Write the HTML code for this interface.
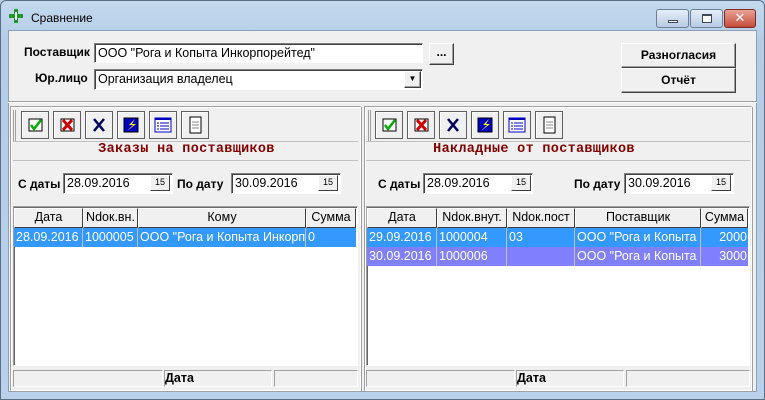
<!DOCTYPE html><html><head><meta charset="utf-8"><style>
*{box-sizing:border-box;margin:0;padding:0}
body{width:765px;height:400px;overflow:hidden;background:#b9d1ea;font-family:"Liberation Sans","DejaVu Sans",sans-serif;font-size:12px;position:relative}
.a{position:absolute}
.frame{left:0;top:0;width:765px;height:400px;background:linear-gradient(#c4d9ee,#b4cde7 40px,#b9d1ea);border:1px solid #5a6e86;border-radius:6px 6px 0 0}
.client{left:8px;top:30px;width:749px;height:362px;background:#f0f0f0;border:1px solid #8ba0b8}
.inp{background:#fff;border:1px solid;border-color:#808080 #fff #fff #808080;box-shadow:inset 1px 1px 0 #404040;padding:2px 3px;font-size:12.5px;white-space:nowrap;overflow:hidden}
.btn{background:#f0f0f0;border:1px solid;border-color:#fff #404040 #404040 #fff;box-shadow:inset -1px -1px 0 #a0a0a0;text-align:center;font-weight:bold}
.b{font-weight:bold}
.panel{border:1px solid;border-color:#a0a0a0 #fff #fff #a0a0a0;box-shadow:inset 1px 1px 0 #fff, 1px 1px 0 #a0a0a0}
.ttl{font-family:"Liberation Mono",monospace;color:#800000;font-size:13.5px;font-weight:bold;letter-spacing:0.3px;text-align:center}
.grid{background:#fff;border:1px solid;border-color:#a0a0a0 #fff #fff #a0a0a0;box-shadow:inset 1px 1px 0 #696969}
.hd{height:20px;background:#f0f0f0;border:1px solid;border-color:#fff #404040 #404040 #fff;text-align:center;line-height:17px;font-size:12.5px;overflow:hidden}
.cell{height:19px;line-height:18px;font-size:12.5px;color:#fff;padding-left:2px;border-right:1px solid #c0c0c0;overflow:hidden;white-space:nowrap}
.st{height:17px;border:1px solid;border-color:#a0a0a0 #fff #fff #a0a0a0;font-weight:bold;font-size:12.5px;line-height:15px}
.cal{width:20px;height:16px;background:#f0f0f0;border:1px solid;border-color:#fff #404040 #404040 #fff;font-size:9px;text-align:center;line-height:13px}
</style></head><body>
<div class="a frame"></div>
<svg class="a" style="left:9px;top:9px" width="14" height="14"><path d="M5 0h4v5h5v4H9v5H5V9H0V5h5z" fill="#1d9a2a"/><path d="M6 3h2v8H6z" fill="#fff"/></svg>
<div class="a" style="left:31px;top:11px;font-size:12px;color:#000">Сравнение</div>
<div class="a" style="left:656px;top:9px;width:33px;height:19px;border:1px solid #6d7f98;border-radius:3px;background:linear-gradient(#e4eef9,#b8cbe2)"><div class="a" style="left:11px;top:10px;width:10px;height:3px;border:1px solid #3c4a5c;background:#fff"></div></div>
<div class="a" style="left:690px;top:9px;width:33px;height:19px;border:1px solid #6d7f98;border-radius:3px;background:linear-gradient(#e4eef9,#b8cbe2)"><div class="a" style="left:11px;top:4px;width:10px;height:9px;border:1px solid #3c4a5c;border-top-width:2px;background:#fff"></div></div>
<div class="a" style="left:724px;top:9px;width:32px;height:19px;border:1px solid #7d2a20;border-radius:3px;background:linear-gradient(#e8a396,#c64b3a);color:#fff;font-weight:bold;text-align:center;line-height:16px;font-size:13px">✕</div>
<div class="a client"></div>
<div class="a b" style="left:24px;top:45px">Поставщик</div>
<div class="a inp" style="left:94px;top:43px;width:329px;height:20px">ООО "Рога и Копыта Инкорпорейтед"</div>
<div class="a btn" style="left:429px;top:43px;width:25px;height:22px;line-height:16px">...</div>
<div class="a b" style="left:35px;top:71px">Юр.лицо</div>
<div class="a inp" style="left:94px;top:69px;width:329px;height:21px">Организация владелец</div>
<div class="a btn" style="left:404px;top:71px;width:17px;height:17px;font-size:8px;line-height:14px">▼</div>
<div class="a btn" style="left:621px;top:43px;width:115px;height:25px;line-height:22px">Разногласия</div>
<div class="a btn" style="left:621px;top:68px;width:115px;height:25px;line-height:22px">Отчёт</div>
<div class="a" style="left:8px;top:101px;width:749px;height:2px;border-top:1px solid #a0a0a0;border-bottom:1px solid #fff"></div>

<!-- left panel -->
<div class="a panel" style="left:10px;top:106px;width:351px;height:285px"></div>
<div class="a" style="left:13px;top:110px;width:202px;height:31px;border-left:3px double #a0a0a0"></div>
<div class="a" style="left:13px;top:141px;width:345px;height:20px;border-top:1px solid #c0c0c0;border-bottom:1px solid #c0c0c0"></div>
<div class="a ttl" style="left:13px;top:142px;width:347px">Заказы на поставщиков</div>
<div class="a b" style="left:18px;top:177px">С даты</div>
<div class="a inp" style="left:63px;top:173px;width:110px;height:21px">28.09.2016</div>
<div class="a cal" style="left:150px;top:175px">15</div>
<div class="a b" style="left:177px;top:177px">По дату</div>
<div class="a inp" style="left:231px;top:173px;width:110px;height:21px">30.09.2016</div>
<div class="a cal" style="left:318px;top:175px">15</div>
<div class="a grid" style="left:13px;top:206px;width:345px;height:160px"></div>
<div class="a hd" style="left:14px;top:208px;width:69px">Дата</div>
<div class="a hd" style="left:83px;top:208px;width:55px">Ndок.вн.</div>
<div class="a hd" style="left:138px;top:208px;width:168px">Кому</div>
<div class="a hd" style="left:306px;top:208px;width:50px">Сумма</div>
<div class="a" style="left:14px;top:228px;width:342px;height:19px;background:#3399ff"></div>
<div class="a cell" style="left:14px;top:228px;width:69px">28.09.2016</div>
<div class="a cell" style="left:83px;top:228px;width:55px">1000005</div>
<div class="a cell" style="left:138px;top:228px;width:168px">ООО "Рога и Копыта Инкорп</div>
<div class="a cell" style="left:306px;top:228px;width:50px;border:0">0</div>
<div class="a st" style="left:13px;top:370px;width:150px"></div>
<div class="a st" style="left:164px;top:370px;width:108px">Дата</div>
<div class="a st" style="left:274px;top:370px;width:84px"></div>

<!-- right panel -->
<div class="a panel" style="left:364px;top:106px;width:388px;height:285px"></div>
<div class="a" style="left:368px;top:110px;width:202px;height:31px;border-left:3px double #a0a0a0"></div>
<div class="a" style="left:366px;top:141px;width:384px;height:20px;border-top:1px solid #c0c0c0;border-bottom:1px solid #c0c0c0"></div>
<div class="a ttl" style="left:366px;top:142px;width:336px">Накладные от поставщиков</div>
<div class="a b" style="left:378px;top:177px">С даты</div>
<div class="a inp" style="left:423px;top:173px;width:110px;height:21px">28.09.2016</div>
<div class="a cal" style="left:511px;top:175px">15</div>
<div class="a b" style="left:574px;top:177px">По дату</div>
<div class="a inp" style="left:624px;top:173px;width:110px;height:21px">30.09.2016</div>
<div class="a cal" style="left:711px;top:175px">15</div>
<div class="a grid" style="left:366px;top:206px;width:384px;height:160px"></div>
<div class="a hd" style="left:367px;top:208px;width:70px">Дата</div>
<div class="a hd" style="left:437px;top:208px;width:70px">Ndок.внут.</div>
<div class="a hd" style="left:507px;top:208px;width:68px">Ndок.пост</div>
<div class="a hd" style="left:575px;top:208px;width:126px">Поставщик</div>
<div class="a hd" style="left:701px;top:208px;width:47px">Сумма</div>
<div class="a" style="left:367px;top:228px;width:381px;height:19px;background:#3399ff"></div>
<div class="a" style="left:367px;top:247px;width:381px;height:19px;background:#8080ff"></div>
<div class="a cell" style="left:367px;top:228px;width:70px">29.09.2016</div>
<div class="a cell" style="left:437px;top:228px;width:70px">1000004</div>
<div class="a cell" style="left:507px;top:228px;width:68px">03</div>
<div class="a cell" style="left:575px;top:228px;width:126px">ООО "Рога и Копыта</div>
<div class="a cell" style="left:701px;top:228px;width:47px;text-align:right;padding-right:1px;border:0">2000</div>
<div class="a cell" style="left:367px;top:247px;width:70px">30.09.2016</div>
<div class="a cell" style="left:437px;top:247px;width:70px">1000006</div>
<div class="a cell" style="left:507px;top:247px;width:68px"></div>
<div class="a cell" style="left:575px;top:247px;width:126px">ООО "Рога и Копыта</div>
<div class="a cell" style="left:701px;top:247px;width:47px;text-align:right;padding-right:1px;border:0">3000</div>
<div class="a st" style="left:366px;top:370px;width:149px"></div>
<div class="a st" style="left:516px;top:370px;width:108px">Дата</div>
<div class="a st" style="left:626px;top:370px;width:124px"></div>

<svg class="a" style="left:21px;top:111px" width="200" height="30">
<g><rect x="0.5" y="0.5" width="27" height="27" fill="#f0f0f0" stroke="#606060"/><path d="M1.5 26.5v-25h25" stroke="#fff" fill="none"/><rect x="8" y="8" width="13" height="12" fill="#fff" stroke="#000"/><path d="M10 14l3 4 7-9" stroke="#0a0" stroke-width="2.5" fill="none"/></g>
<g transform="translate(32,0)"><rect x="0.5" y="0.5" width="27" height="27" fill="#f0f0f0" stroke="#606060"/><path d="M1.5 26.5v-25h25" stroke="#fff" fill="none"/><rect x="8" y="8" width="13" height="12" fill="#fff" stroke="#000"/><path d="M10 9l9 10M19 9l-9 10" stroke="#c00" stroke-width="3"/></g>
<g transform="translate(64,0)"><rect x="0.5" y="0.5" width="27" height="27" fill="#f0f0f0" stroke="#606060"/><path d="M1.5 26.5v-25h25" stroke="#fff" fill="none"/><path d="M9 8l10 12M19 8L9 20" stroke="#000060" stroke-width="2.5"/></g>
<g transform="translate(96,0)"><rect x="0.5" y="0.5" width="27" height="27" fill="#f0f0f0" stroke="#606060"/><path d="M1.5 26.5v-25h25" stroke="#fff" fill="none"/><rect x="7" y="7" width="14" height="14" fill="#0000c0" stroke="#000"/><path d="M18 8l-6 6h4l-6 6 9-7h-4z" fill="#ff0"/></g>
<g transform="translate(128,0)"><rect x="0.5" y="0.5" width="27" height="27" fill="#f0f0f0" stroke="#606060"/><path d="M1.5 26.5v-25h25" stroke="#fff" fill="none"/><rect x="6" y="7" width="16" height="14" fill="#fff" stroke="#0000c0"/><rect x="6" y="7" width="16" height="2" fill="#0000c0"/><path d="M8 12h2M11 12h9M8 15h2M11 15h9M8 18h2M11 18h9" stroke="#0000c0"/></g>
<g transform="translate(160,0)"><rect x="0.5" y="0.5" width="27" height="27" fill="#f0f0f0" stroke="#606060"/><path d="M1.5 26.5v-25h25" stroke="#fff" fill="none"/><rect x="9" y="6" width="11" height="16" fill="#fff" stroke="#000"/><path d="M11 11h7M11 14h7M11 17h7" stroke="#888"/></g>
</svg>
<svg class="a" style="left:375px;top:111px" width="200" height="30">
<g><rect x="0.5" y="0.5" width="27" height="27" fill="#f0f0f0" stroke="#606060"/><path d="M1.5 26.5v-25h25" stroke="#fff" fill="none"/><rect x="8" y="8" width="13" height="12" fill="#fff" stroke="#000"/><path d="M10 14l3 4 7-9" stroke="#0a0" stroke-width="2.5" fill="none"/></g>
<g transform="translate(32,0)"><rect x="0.5" y="0.5" width="27" height="27" fill="#f0f0f0" stroke="#606060"/><path d="M1.5 26.5v-25h25" stroke="#fff" fill="none"/><rect x="8" y="8" width="13" height="12" fill="#fff" stroke="#000"/><path d="M10 9l9 10M19 9l-9 10" stroke="#c00" stroke-width="3"/></g>
<g transform="translate(64,0)"><rect x="0.5" y="0.5" width="27" height="27" fill="#f0f0f0" stroke="#606060"/><path d="M1.5 26.5v-25h25" stroke="#fff" fill="none"/><path d="M9 8l10 12M19 8L9 20" stroke="#000060" stroke-width="2.5"/></g>
<g transform="translate(96,0)"><rect x="0.5" y="0.5" width="27" height="27" fill="#f0f0f0" stroke="#606060"/><path d="M1.5 26.5v-25h25" stroke="#fff" fill="none"/><rect x="7" y="7" width="14" height="14" fill="#0000c0" stroke="#000"/><path d="M18 8l-6 6h4l-6 6 9-7h-4z" fill="#ff0"/></g>
<g transform="translate(128,0)"><rect x="0.5" y="0.5" width="27" height="27" fill="#f0f0f0" stroke="#606060"/><path d="M1.5 26.5v-25h25" stroke="#fff" fill="none"/><rect x="6" y="7" width="16" height="14" fill="#fff" stroke="#0000c0"/><rect x="6" y="7" width="16" height="2" fill="#0000c0"/><path d="M8 12h2M11 12h9M8 15h2M11 15h9M8 18h2M11 18h9" stroke="#0000c0"/></g>
<g transform="translate(160,0)"><rect x="0.5" y="0.5" width="27" height="27" fill="#f0f0f0" stroke="#606060"/><path d="M1.5 26.5v-25h25" stroke="#fff" fill="none"/><rect x="9" y="6" width="11" height="16" fill="#fff" stroke="#000"/><path d="M11 11h7M11 14h7M11 17h7" stroke="#888"/></g>
</svg>
</body></html>
